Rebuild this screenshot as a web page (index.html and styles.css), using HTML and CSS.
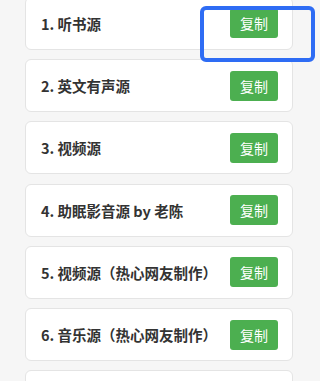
FILE: index.html
```html
<!DOCTYPE html>
<html lang="zh-CN">
<head>
  <meta charset="UTF-8">
  <title>资源列表</title>
  <link rel="stylesheet" href="styles.css">
</head>
<body>

<div class="list">
  <div class="item"><span class="name">1. 听书源</span><button class="copy">复制</button></div>
  <div class="item"><span class="name">2. 英文有声源</span><button class="copy">复制</button></div>
  <div class="item"><span class="name">3. 视频源</span><button class="copy">复制</button></div>
  <div class="item"><span class="name">4. 助眠影音源 by 老陈</span><button class="copy">复制</button></div>
  <div class="item"><span class="name">5. 视频源（热心网友制作）</span><button class="copy">复制</button></div>
  <div class="item"><span class="name">6. 音乐源（热心网友制作）</span><button class="copy">复制</button></div>
  <div class="item"></div>
</div>

<div class="highlight"></div>

</body>
</html>
```

FILE: styles.css
```css
html, body { margin: 0; padding: 0; }
body {
  font-family: "Noto Sans CJK SC", "Noto Sans", sans-serif;
  background: #f6f6f6;
  overflow: hidden;
  position: relative;
  height: 381px;
}
.list {
  display: flex; flex-direction: column;
  gap: 9.25px;
  margin: -3.25px 27px 0 25px;
}
.item {
  height: 53px;
  flex-shrink: 0;
  box-sizing: border-box;
  background: #fff;
  border: 1px solid #e4e4e4;
  border-radius: 6px;
  display: flex; align-items: center; justify-content: space-between;
  padding: 0 14px 0 15px;
}
.name { font-size: 14.5px; font-weight: 600; color: #333; }
.copy {
  width: 48px; height: 30px;
  border: none; border-radius: 3px;
  background: #4caf50; color: #fff;
  font-family: inherit; font-size: 14px;
  padding: 0;
}
.highlight {
  position: absolute;
  left: 200px; top: 6px;
  width: 115px; height: 56px;
  box-sizing: border-box;
  border: 4px solid #2e6cf4;
  border-radius: 6px;
}
```
